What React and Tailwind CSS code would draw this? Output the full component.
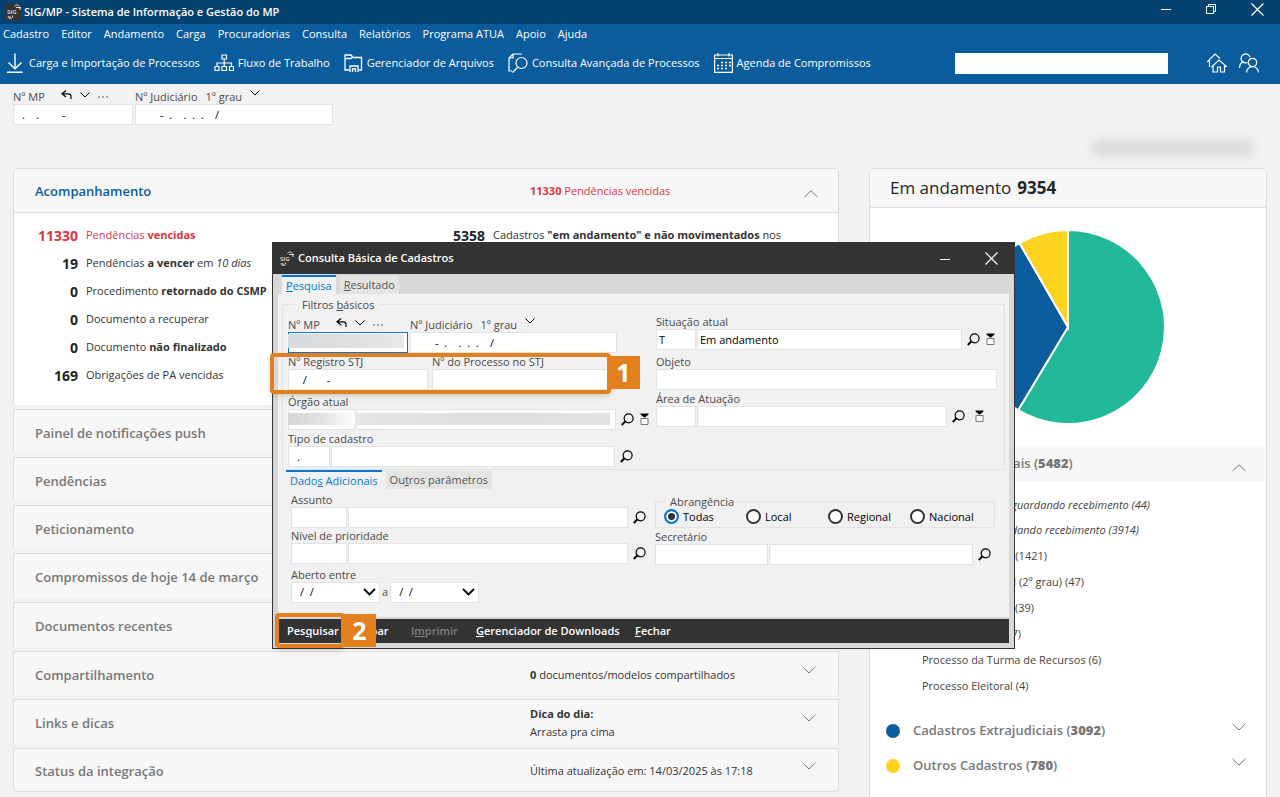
import React, { useState } from "react";
import clsx from "clsx";

const menus = [
  "Cadastro",
  "Editor",
  "Andamento",
  "Carga",
  "Procuradorias",
  "Consulta",
  "Relatórios",
  "Programa ATUA",
  "Apoio",
  "Ajuda",
];

const panels = [
  { title: "Painel de notificações push" },
  { title: "Pendências" },
  { title: "Peticionamento" },
  { title: "Compromissos de hoje 14 de março", tall: true },
  { title: "Documentos recentes", tall: true },
  {
    title: "Compartilhamento",
    info: (
      <>
        <b>0</b> documentos/modelos compartilhados
      </>
    ),
  },
  {
    title: "Links e dicas",
    tall: true,
    info: (
      <>
        <b>Dica do dia:</b>
        <br />
        Arrasta pra cima
      </>
    ),
  },
  { title: "Status da integração", info: "Última atualização em: 14/03/2025 às 17:18" },
];

const followUps = [
  { count: "11330", danger: true, text: <>Pendências <b>vencidas</b></> },
  { count: "19", text: <>Pendências <b>a vencer</b> em <i>10 dias</i></> },
  { count: "0", text: <>Procedimento <b>retornado do CSMP</b></> },
  { count: "0", text: "Documento a recuperar" },
  { count: "0", text: <>Documento <b>não finalizado</b></> },
  { count: "169", text: "Obrigações de PA vencidas" },
];

const judicial = [
  { text: "Inquérito aguardando recebimento (44)", width: "w-[228px]", italic: true },
  { text: "Processo aguardando recebimento (3914)", width: "w-[217px]", italic: true },
  { text: "Processo Judicial (1421)", width: "w-[125px]" },
  { text: "Processo Judicial (2º grau) (47)", width: "w-[162px]" },
  { text: "Inquérito Policial (39)", width: "w-[112px]" },
  { text: "Carta Precatória (7)", width: "w-[99px]" },
  { text: "Processo da Turma de Recursos (6)" },
  { text: "Processo Eleitoral (4)" },
];

/* ---------- icons ---------- */

const Svg = ({ size = 20, width, height, className, children, viewBox, sw = 1 }) => (
  <svg
    width={width || size}
    height={height || size}
    viewBox={viewBox || `0 0 ${width || size} ${height || size}`}
    fill="none"
    stroke="currentColor"
    strokeWidth={sw}
    className={clsx("shrink-0", className)}
    aria-hidden="true"
  >
    {children}
  </svg>
);

const Logo = () => (
  <svg width="16" height="16" viewBox="0 0 16 16" className="shrink-0 bg-[#333]" aria-hidden="true">
    <text x="1" y="10" fontSize="6" fontWeight="600" fill="#e8e8e8" fontFamily="Open Sans">
      SIG
    </text>
    <g fill="none" stroke="#e8e8e8">
      <path d="M8.500 2.500c1-2 4-2 5 0M10 3.500h5M14 3v3" />
      <path d="M2.500 12c-1 2 1 3 3.500 2M3 12.500l2 1M6 11.500l1 2" />
    </g>
  </svg>
);

const DownloadIcon = () => (
  <Svg width={16} height={20} sw={1.4}>
    <path d="M8 0.500v15M1.500 9.500 8 15.800l6.500-6.300M0 19.300h15.500" />
  </Svg>
);

const FlowIcon = () => (
  <Svg width={20} height={18} sw={1.2}>
    <path d="M8 1h4.500v4H8zM10.200 5v7M3 12V9h14.500v3M1 12.500h4v4H1zM8 12.500h4.500v4H8zM15.500 12.500h4v4h-4z" />
  </Svg>
);

const FilesIcon = () => (
  <Svg width={19} height={19} sw={1.3}>
    <path d="M5 16H1V1h6l2 2.500h8.500V16H15" />
    <path d="M1 4.500h6L9 3M6 18v-6h8v6M8.500 18v-3h3v3" />
  </Svg>
);

const DocSearchIcon = () => (
  <Svg width={20} height={20} sw={1.2}>
    <path d="M14 1H5L1 5v13h3M5 1v4H1" />
    <circle cx="13.500" cy="10" r="5.500" />
    <path d="M9.500 14.500 4.500 19.500" />
  </Svg>
);

const CalendarIcon = () => (
  <Svg width={19} height={20} sw={1.2}>
    <path d="M0.600 2h17.800v17.400H0.600zM0.600 5.500h17.800M4 0v3.500M15 0v3.500" />
    <path d="M7 9.500h10M3 12.500h14M3 15.500h10" strokeDasharray="2 2" strokeWidth="1.600" />
  </Svg>
);

const HomesIcon = () => (
  <Svg size={20} sw={1.2}>
    <path d="M2.500 14V8L0.500 8.500 8 1l5 4.500" />
    <path d="M4.500 14 12 7l7.500 6.500H17.500V19h-4v-5h-3v5H6v-5.500z" />
  </Svg>
);

const UsersIcon = () => (
  <Svg size={20} sw={1.2}>
    <path d="M8.500 9.500a4.500 4.500 0 1 1 2.500-5" />
    <path d="M0.500 15c0-3 2-5.500 4-6.500" />
    <circle cx="13.500" cy="9.500" r="4.200" />
    <path d="M7.500 19.500c.3-3.500 3-6 6-6s5.700 2.500 6 6" />
  </Svg>
);

const Chevron = ({ up, className }) => (
  <Svg width={14} height={8} className={clsx("text-[#777]", className)}>
    <path d={up ? "M0.500 7 7 0.800 13.500 7" : "M0.500 0.800 7 7l6.500-6.200"} />
  </Svg>
);

const SmallChevron = () => (
  <Svg width={10} height={6} className="text-black">
    <path d="M0.500 0.500 5 5 9.500 0.500" />
  </Svg>
);

const UndoIcon = () => (
  <Svg width={11} height={9} sw={1.2} className="text-black">
    <path d="M5 0.500 1 3.800 5 7M1 3.800h6c2 0 3 1 3 2.500V9" />
  </Svg>
);

const SearchButton = ({ label }) => (
  <button type="button" aria-label={label} className="text-black">
    <Svg size={13} sw={1.2}>
      <circle cx="7.600" cy="5.300" r="4.500" />
      <path d="M4.200 8.500 0.800 12" strokeWidth="1.800" />
    </Svg>
  </button>
);

const FilterButton = ({ label }) => (
  <button type="button" aria-label={label}>
    <svg width="9" height="13" viewBox="0 0 9 13" aria-hidden="true">
      <path d="M0.500 0.500h8v1L5 4.500H4L0.500 1.500z" fill="#000" />
      <path d="M1 5.500h7v6H1z" fill="#fff" stroke="#777" />
    </svg>
  </button>
);

const WindowClose = () => (
  <button type="button" aria-label="Fechar janela">
    <Svg size={13} sw={1.2}>
      <path d="M0.500 0.500l12 12M12.500 0.500l-12 12" />
    </Svg>
  </button>
);

const WindowMinimize = () => (
  <button type="button" aria-label="Minimizar">
    <Svg width={10} height={12}>
      <path d="M0 6.500h10" />
    </Svg>
  </button>
);

/* ---------- form pieces ---------- */

const Input = ({ className, focused, padding = "px-2", ...props }) => (
  <input
    type="text"
    className={clsx(
      "block h-[21px] min-w-0 border bg-white text-[11px] text-black outline-none",
      focused ? "border-[#0078d7]" : "border-[#e3e3e3]",
      padding,
      className
    )}
    {...props}
  />
);

const Label = ({ className, ...props }) => (
  <label className={clsx("block h-[15px] text-[11px] leading-4 text-[#4a4a4a]", className)} {...props} />
);

const ProcessNumbers = ({ id, mpClass, judClass, mpValue, focused }) => (
  <div className="flex gap-0.5">
    <div className={mpClass}>
      <div className="flex h-[15px] items-center">
        <Label htmlFor={`${id}-mp`}>Nº MP</Label>
        <span className="mb-1 ml-4 flex items-center gap-2">
          <UndoIcon />
          <SmallChevron />
          <span className="flex gap-0.5 pt-1">
            <i className="size-0.5 bg-[#aaa]" />
            <i className="size-0.5 bg-[#aaa]" />
            <i className="size-0.5 bg-[#aaa]" />
          </span>
        </span>
      </div>
      <div className="relative">
        <Input id={`${id}-mp`} defaultValue={mpValue} focused={focused} className="w-full" />
        {focused && (
          <span className="absolute top-0.5 left-0 h-3.5 w-[116px] bg-linear-to-r from-[#d5dbe0] via-[#dedede] to-[#e9e9e9]" />
        )}
      </div>
    </div>
    <div className={judClass}>
      <div className="flex h-[15px] items-center">
        <Label htmlFor={`${id}-jud`}>Nº Judiciário</Label>
        <button type="button" className="ml-2 flex h-[15px] items-center gap-2 text-[11px] leading-4 text-[#4a4a4a]">
          1º grau
          <span className="mb-2">
            <SmallChevron />
          </span>
        </button>
      </div>
      <Input id={`${id}-jud`} defaultValue="-  .    .  .  .    /" padding="pr-2 pl-6" className="w-full" />
    </div>
  </div>
);

const CodeField = ({
  id,
  label,
  code,
  value,
  codeClass,
  valueClass,
  className,
  filter,
  filterGap = "gap-1.5",
  blurred,
}) => (
  <div className={className}>
    <Label htmlFor={id}>{label}</Label>
    <div className="flex items-center gap-[5px]">
      <div className="relative flex gap-px">
        <Input id={id} defaultValue={code} className={codeClass} padding={code === "T" ? "px-0.5" : "px-2"} />
        <Input
          aria-label={`${label} - descrição`}
          defaultValue={value}
          padding="px-0.5"
          className={valueClass}
        />
        {blurred && (
          <span className="absolute top-1 left-0 flex h-3 w-[322px]">
            <i className="w-[67px] bg-linear-to-r from-[#d6d6d6] via-[#e2e2e2] to-white" />
            <i className="flex-1 bg-linear-to-r from-[#e6e6e6] via-[#dedede] to-[#e2e2e2]" />
          </span>
        )}
      </div>
      <div className={clsx("flex items-center", filterGap)}>
        <SearchButton label={`Pesquisar ${label}`} />
        {filter && <FilterButton label={`Filtrar ${label}`} />}
      </div>
    </div>
  </div>
);

const DateSelect = (props) => (
  <div className="relative">
    <select
      className="block h-[21px] w-[89px] appearance-none border border-[#e3e3e3] bg-white px-2 text-[11px] text-black"
      {...props}
    >
      <option>/&nbsp; /</option>
    </select>
    <Svg width={13} height={8} sw={1.8} className="pointer-events-none absolute top-1.5 right-1 text-black">
      <path d="M1 1l5.500 5.500L12 1" />
    </Svg>
  </div>
);

/* ---------- page ---------- */

const ToolButton = ({ icon, children, gap = "gap-1.5" }) => (
  <button type="button" className={clsx("flex items-center whitespace-nowrap", gap)}>
    {icon}
    {children}
  </button>
);

const Header = () => (
  <header className="text-white">
    <div className="flex h-6 items-center bg-[#05426f] pl-1.5">
      <Logo />
      <h1 className="ml-0.5 flex-1 text-[11px] font-semibold">SIG/MP - Sistema de Informação e Gestão do MP</h1>
      <div className="mb-1.5 flex items-center gap-[35px] pr-4">
        <WindowMinimize />
        <button type="button" aria-label="Restaurar">
          <Svg size={10}>
            <path d="M0.500 2.500h7v7h-7zM2.500 2.500v-2h7v7h-2" />
          </Svg>
        </button>
        <WindowClose />
      </div>
    </div>
    <div className="bg-[#0b5c9d]">
      <nav className="flex h-5 items-center gap-3 pl-[3px] text-[11px]">
        {menus.map((menu) => (
          <button key={menu} type="button">
            {menu}
          </button>
        ))}
      </nav>
      <div className="flex h-10 items-center justify-between pr-[21px] pb-0.5 pl-[7px] text-[11px]">
        <div className="flex items-center gap-3.5">
          <ToolButton icon={<DownloadIcon />}>Carga e Importação de Processos</ToolButton>
          <ToolButton icon={<FlowIcon />} gap="gap-1">Fluxo de Trabalho</ToolButton>
          <ToolButton icon={<FilesIcon />} gap="gap-1">Gerenciador de Arquivos</ToolButton>
          <ToolButton icon={<DocSearchIcon />} gap="gap-1">Consulta Avançada de Processos</ToolButton>
          <ToolButton icon={<CalendarIcon />} gap="gap-1">Agenda de Compromissos</ToolButton>
        </div>
        <div className="flex items-center gap-3">
          <input aria-label="Busca" className="mr-[27px] h-[21px] w-[213px] bg-white px-2 text-black" />
          <button type="button" aria-label="Início">
            <HomesIcon />
          </button>
          <button type="button" aria-label="Usuários">
            <UsersIcon />
          </button>
        </div>
      </div>
    </div>
  </header>
);

const Acompanhamento = () => (
  <section className="mb-1 rounded-t border border-b-0 border-[#ddd] bg-white">
    <div className="flex h-11 items-center border-b border-[#ddd] bg-[#f7f7f7] pr-5 pl-[21px]">
      <h2 className="w-[495px] pt-0.5 text-[13px] font-semibold text-[#0b5c9d]">Acompanhamento</h2>
      <p className="flex-1 pt-0.5 text-[11px] text-[#dc3545]">
        <b>11330</b> Pendências vencidas
      </p>
      <Chevron up className="mt-1.5" />
    </div>
    <div className="flex h-48 pt-2">
      <ul className="w-[415px] pl-4">
        {followUps.map((item, i) => (
          <li key={i} className={clsx("flex h-7 items-center gap-2", item.danger ? "text-[#dc3545]" : "text-[#333]")}>
            <b className={clsx("w-12 text-right text-[14px]", !item.danger && "text-[#212529]")}>{item.count}</b>
            <span className="text-[11px]">{item.text}</span>
          </li>
        ))}
      </ul>
      <p className="flex h-7 items-center gap-2 pl-6 text-[#333]">
        <b className="text-[14px] text-[#212529]">5358</b>
        <span className="text-[11px]">
          Cadastros <b>"em andamento" e não movimentados</b> nos
        </span>
      </p>
    </div>
  </section>
);

const Panel = ({ title, info, tall, last }) => (
  <section
    className={clsx(
      "mb-1 flex items-center border border-[#ddd] bg-[#f7f7f7] pr-[22px] pl-[21px]",
      last ? "rounded-b" : "border-b-0",
      tall ? "h-[45px]" : "h-11"
    )}
  >
    <h2 className="w-[495px] pt-1 text-[13px] font-semibold text-[#777]">{title}</h2>
    <p className="flex-1 pt-0.5 text-[11px] leading-[18px] text-[#333]">{info}</p>
    <Chevron className="mb-2" />
  </section>
);

const slicePoint = (turn, r = 97) => [
  100 + r * Math.sin(turn * 2 * Math.PI),
  100 - r * Math.cos(turn * 2 * Math.PI),
];

const Pie = () => {
  const slices = [
    { value: 5482, color: "#22b99a" },
    { value: 3092, color: "#0b5c9d" },
    { value: 780, color: "#ffd21f" },
  ];
  const total = 9354;
  let start = 0;

  return (
    <svg width="200" height="200" viewBox="0 0 200 200" className="mx-auto" role="img" aria-label="Cadastros em andamento">
      {slices.map(({ value, color }) => {
        const end = start + value / total;
        const [x1, y1] = slicePoint(start);
        const [x2, y2] = slicePoint(end);
        const large = value / total > 0.5 ? 1 : 0;
        start = end;
        return (
          <path
            key={color}
            d={`M100 100L${x1} ${y1}A97 97 0 ${large} 1 ${x2} ${y2}Z`}
            fill={color}
            stroke="#fff"
            strokeWidth="2"
          />
        );
      })}
    </svg>
  );
};

const GroupTitle = ({ color, label, count, open }) => (
  <div className={clsx("flex h-[35px] items-center pr-5 pl-4", open && "bg-[#f7f7f7]")}>
    <span className={clsx("size-3.5 rounded-full", color)} />
    <h3 className="ml-[13px] flex-1 text-[13px] font-semibold text-[#777]">
      {label} (<b className="font-extrabold">{count}</b>)
    </h3>
    <Chevron up={open} className={open ? "mt-2" : "mb-2"} />
  </div>
);

const Sidebar = () => (
  <aside className="w-[398px] shrink-0 rounded-t border border-[#ddd] bg-white pb-10">
    <h2 className="flex h-[39px] items-center gap-1.5 border-b border-[#ddd] bg-[#f7f7f7] pl-5 text-[17px] text-[#212529]">
      Em andamento <b>9354</b>
    </h2>
    <div className="pt-[19px] pb-[19px]">
      <Pie />
    </div>
    <GroupTitle color="bg-[#22b99a]" label="Cadastros Judiciais" count="5482" open />
    <ul className="mt-3 mb-3.5 pl-[52px] text-[11px] text-[#444]">
      {judicial.map((item) => (
        <li
          key={item.text}
          className={clsx(
            "flex items-center whitespace-nowrap",
            item.width,
            item.width && "justify-end",
            item.italic ? "h-[25px] italic" : "h-[26px]"
          )}
        >
          {item.text}
        </li>
      ))}
    </ul>
    <GroupTitle color="bg-[#0b5c9d]" label="Cadastros Extrajudiciais" count="3092" />
    <GroupTitle color="bg-[#ffd21f]" label="Outros Cadastros" count="780" />
  </aside>
);

const Tab = ({ active, children }) => (
  <button
    type="button"
    role="tab"
    aria-selected={active}
    className={clsx(
      "px-1 text-[11px] leading-4",
      active
        ? "h-[19px] border-t-2 border-[#0078d7] bg-[#f1f1f1] text-[#0078d7]"
        : "mt-px h-[18px] bg-[#e4e4e3] text-[#555]"
    )}
  >
    {children}
  </button>
);

const Abrangencia = () => {
  const [scope, setScope] = useState("Todas");

  return (
    <fieldset className="h-[34px] w-[340px] border border-[#e3e3e3] px-2">
      <legend className="ml-0.5 h-[15px] px-1 text-[11px] leading-[15px] text-[#4a4a4a]">Abrangência</legend>
      <div className="flex">
        {["Todas", "Local", "Regional", "Nacional"].map((option) => (
          <label
            key={option}
            className="flex w-[82px] shrink-0 items-center gap-1 text-[11px] leading-[15px] text-black last:w-auto"
          >
            <input
              type="radio"
              name="abrangencia"
              checked={scope === option}
              onChange={() => setScope(option)}
              className="size-[15px] appearance-none rounded-full border-2 border-[#333] bg-white checked:border-[#0078d7] checked:bg-[#333] checked:shadow-[inset_0_0_0_2px_#fff]"
            />
            {option}
          </label>
        ))}
      </div>
    </fieldset>
  );
};

const SearchWindow = () => (
  <div
    role="dialog"
    aria-label="Consulta Básica de Cadastros"
    className="absolute top-[242px] left-[272px] w-[743px] border border-[#333] bg-[#d8d8d8]"
  >
    <div className="flex h-[31px] items-center bg-[#333] pr-4 pl-1.5 text-white">
      <Logo />
      <h2 className="ml-[3px] flex-1 text-[11px] font-semibold">Consulta Básica de Cadastros</h2>
      <div className="flex items-center gap-[35px]">
        <WindowMinimize />
        <WindowClose />
      </div>
    </div>

    <div className="px-[5px] pt-px pb-[5px]">
      <div role="tablist" className="flex gap-1 pl-1">
        <Tab active><u>P</u>esquisa</Tab>
        <Tab><u>R</u>esultado</Tab>
      </div>

      <div className="h-[323px] bg-[#f1f1f1] px-1 pt-[3px]">
        <fieldset className="h-[173px] border border-[#e3e3e3] px-[5px]">
          <legend className="ml-2 h-[15px] px-1.5 text-[11px] leading-[15px] text-[#4a4a4a]">
            Filtros <u>b</u>ásicos
          </legend>
          <div className="flex pt-0.5">
            <div className="w-[368px] pt-[3px]">
              <ProcessNumbers id="filtro" mpClass="w-[120px]" judClass="w-[207px]" focused />
              <div className="mt-px flex gap-1">
                <div className="w-[140px]">
                  <Label htmlFor="stj-registro">Nº Registro STJ</Label>
                  <Input id="stj-registro" defaultValue="  /       -" className="w-full" />
                </div>
                <div className="w-[185px]">
                  <Label htmlFor="stj-processo">Nº do Processo no STJ</Label>
                  <Input id="stj-processo" className="w-full" />
                </div>
              </div>
              <CodeField
                id="orgao"
                label="Órgão atual"
                className="mt-1"
                codeClass="w-[67px]"
                valueClass="w-[260px]"
                filter
                blurred
              />
              <CodeField
                id="tipo"
                label="Tipo de cadastro"
                code="."
                className="mt-px"
                codeClass="w-[42px]"
                valueClass="w-[284px]"
              />
            </div>
            <div>
              <CodeField
                id="situacao"
                label="Situação atual"
                code="T"
                value="Em andamento"
                codeClass="w-10"
                valueClass="w-[265px]"
                filter
              />
              <div className="mt-1">
                <Label htmlFor="objeto">Objeto</Label>
                <Input id="objeto" className="w-[341px]" />
              </div>
              <CodeField
                id="area"
                label="Área de Atuação"
                className="mt-px"
                codeClass="w-10"
                valueClass="w-[250px]"
                filterGap="gap-2.5"
                filter
              />
            </div>
          </div>
        </fieldset>

        <div role="tablist" className="flex gap-1 pl-1">
          <Tab active>Dado<u>s</u> Adicionais</Tab>
          <Tab>Ou<u>t</u>ros parâmetros</Tab>
        </div>

        <div className="flex pt-[3px] pl-[9px]">
          <div className="w-[364px] shrink-0">
            <CodeField id="assunto" label="Assunto" codeClass="w-14" valueClass="w-[280px]" />
            <CodeField id="prioridade" label="Nível de prioridade" codeClass="w-14" valueClass="w-[280px]" />
            <div className="mt-[3px]">
              <Label htmlFor="aberto-de">Aberto entre</Label>
              <div className="flex items-center gap-0.5 text-[11px] text-[#4a4a4a]">
                <DateSelect id="aberto-de" />
                a
                <DateSelect aria-label="Aberto até" />
              </div>
            </div>
          </div>
          <div className="shrink-0 pt-0.5">
            <Abrangencia />
            <CodeField
              id="secretario"
              label="Secretário"
              className="mt-px"
              codeClass="w-[113px]"
              valueClass="w-[204px]"
            />
          </div>
        </div>
      </div>

      <div className="mt-0.5 flex h-6 items-center bg-[#333] pl-[9px] text-[11px] font-semibold text-white">
        <button type="button" className="w-16 text-left">Pes<u>q</u>uisar</button>
        <button type="button" className="w-[60px] text-left"><u>L</u>impar</button>
        <button type="button" disabled className="w-[65px] text-left text-[#808080]">I<u>m</u>primir</button>
        <button type="button" className="w-[159px] text-left"><u>G</u>erenciador de Downloads</button>
        <button type="button"><u>F</u>echar</button>
      </div>
    </div>
  </div>
);

const Step = ({ number, className }) => (
  <span
    className={clsx(
      "absolute flex h-[33px] w-[33px] items-center justify-center bg-[#e37f1c] text-[25px] font-bold text-white",
      className
    )}
  >
    {number}
  </span>
);

export default function App() {
  return (
    <div className="relative h-screen overflow-hidden bg-[#f2f2f2] font-['Open_Sans','Noto_Sans',sans-serif]">
      <Header />
      <div className="flex h-[84px] items-start justify-between pr-[27px] pl-[13px]">
        <div className="pt-[5px]">
          <ProcessNumbers id="topo" mpClass="w-[120px]" judClass="w-[198px]" mpValue=".    .        -" />
        </div>
        <span className="mt-14 h-4 w-40 rounded bg-[#dadada] blur-[5px]" />
      </div>
      <main className="flex items-start gap-[30px] px-[13px]">
        <div className="min-w-0 flex-1">
          <Acompanhamento />
          {panels.map((panel, i) => (
            <Panel key={panel.title} {...panel} last={i === panels.length - 1} />
          ))}
        </div>
        <Sidebar />
      </main>

      <SearchWindow />

      <div className="pointer-events-none absolute top-[353px] left-[270px] h-[41px] w-[341px] rounded-sm border-4 border-[#e37f1c] shadow-md" />
      <Step number="1" className="top-[356px] left-[607px]" />
      <div className="pointer-events-none absolute top-[613px] left-[275px] h-[35px] w-[70px] rounded-sm border-4 border-[#e37f1c] shadow-md" />
      <Step number="2" className="top-[614px] left-[343px]" />
    </div>
  );
}
